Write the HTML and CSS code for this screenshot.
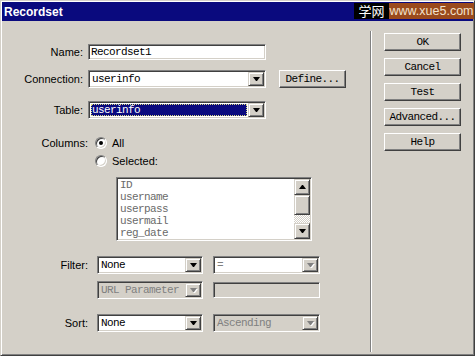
FILE: index.html
```html
<!DOCTYPE html>
<html lang="en">
<head>
  <meta charset="UTF-8" />
  <title>Recordset</title>
  <link rel="stylesheet" href="styles.css">
</head>
<body>
  <div class="window">
    <!-- Title bar -->
    <div class="titlebar">
      <span class="title">Recordset</span>
    </div>

    <!-- Site watermark over the title bar -->
    <div class="brand">
      <span class="brand-cn">学网</span>
      <span class="brand-url">www.xue5.com</span>
    </div>

    <div class="dialog">
      <!-- Form -->
      <div class="form">
        <div class="row row-name">
          <span class="label label-top">Name:</span>
          <div class="field field-name">Recordset1</div>
        </div>

        <div class="row row-conn">
          <span class="label label-top">Connection:</span>
          <div class="select select-main">
            <span class="select-text">userinfo</span>
            <span class="arrow"></span>
          </div>
          <div class="btn btn-define">Define...</div>
        </div>

        <div class="row row-table">
          <span class="label label-top">Table:</span>
          <div class="select select-main">
            <span class="select-text"><span class="focused">userinfo</span></span>
            <span class="arrow"></span>
          </div>
        </div>

        <div class="columns">
          <span class="label label-cols">Columns:</span>
          <div class="options">
            <div class="option"><span class="radio checked"></span>All</div>
            <div class="option option-sel"><span class="radio"></span>Selected:</div>
            <div class="listbox">
              <div class="list-items">
                <div>ID</div>
                <div>username</div>
                <div>userpass</div>
                <div>usermail</div>
                <div>reg_date</div>
              </div>
              <div class="scrollbar">
                <span class="sb-btn sb-up"></span>
                <span class="sb-thumb"></span>
                <span class="sb-track"></span>
                <span class="sb-btn sb-down"></span>
              </div>
            </div>
          </div>
        </div>

        <div class="row row-filter">
          <span class="label label-low">Filter:</span>
          <div class="select select-small">
            <span class="select-text">None</span>
            <span class="arrow"></span>
          </div>
          <div class="select select-small2 disabled-white">
            <span class="select-text">=</span>
            <span class="arrow"></span>
          </div>
        </div>

        <div class="row row-param">
          <span class="label label-low"></span>
          <div class="select select-small disabled">
            <span class="select-text">URL Parameter</span>
            <span class="arrow"></span>
          </div>
          <div class="field field-param disabled"></div>
        </div>

        <div class="row row-sort">
          <span class="label label-low">Sort:</span>
          <div class="select select-small">
            <span class="select-text">None</span>
            <span class="arrow"></span>
          </div>
          <div class="select select-small2 disabled">
            <span class="select-text">Ascending</span>
            <span class="arrow"></span>
          </div>
        </div>
      </div>

      <div class="separator"></div>

      <!-- Buttons -->
      <div class="actions">
        <div class="btn">OK</div>
        <div class="btn">Cancel</div>
        <div class="btn">Test</div>
        <div class="btn">Advanced...</div>
        <div class="btn">Help</div>
      </div>
    </div>
  </div>
</body>
</html>
```

FILE: styles.css
```css
/* ---- Global ---- */
html, body {
  margin: 0;
  padding: 0;
  overflow: hidden;
  background: #d4d0c8;
  font-family: "Liberation Sans", Arial, sans-serif;
  font-size: 11px;
  color: #000;
}

/* ---- Window frame ---- */
.window {
  position: relative;
  box-sizing: border-box;
  width: 475px;
  height: 356px;
  border: 1px solid;
  border-color: #d4d0c8 #404040 #404040 #d4d0c8;
  box-shadow: inset 1px 1px #fff, inset -1px -1px #808080;
  padding: 1px;
  display: flex;
  flex-direction: column;
}

.titlebar {
  height: 19px;
  background: #0a0a7e;
  display: flex;
  align-items: center;
  padding-left: 2px;
}
.title {
  color: #fff;
  font-weight: bold;
  font-size: 12px;
}

/* watermark */
.brand {
  position: absolute;
  top: 2px;
  right: 0;
  display: flex;
  height: 16px;
}
.brand-cn {
  background: #000;
  color: #fff;
  width: 35px;
  text-align: center;
  font-family: "Noto Sans CJK SC", sans-serif;
  font-size: 13px;
  line-height: 16px;
}
.brand-url {
  background: #9a4a1c;
  color: #f2e2cc;
  width: 85px;
  text-align: center;
  font-size: 12.5px;
  line-height: 16px;
}

/* ---- Dialog body ---- */
.dialog {
  flex: 1;
  display: flex;
}
.form {
  width: 368px;
  padding-top: 23px;
}
.separator {
  width: 1px;
  border-right: 1px solid #fff;
  background: #808080;
  margin: 10px 0 2px;
}
.actions {
  padding: 12px 0 0 12px;
  display: flex;
  flex-direction: column;
  gap: 7px;
}
.actions .btn {
  width: 77px;
}

/* ---- Rows ---- */
.row {
  display: flex;
  align-items: center;
}
.row-name  { height: 16px; }
.row-conn  { height: 18px; margin-top: 10px; }
.row-table { height: 18px; margin-top: 13px; }
.row-filter { height: 18px; margin-top: 15px; }
.row-param { height: 18px; margin-top: 7px; }
.row-sort  { height: 18px; margin-top: 15px; }

.label {
  text-align: right;
  flex: none;
}
.label-top { width: 81px; margin-right: 5px; }
.label-low { width: 86px; margin-right: 9px; }
.label-cols { width: 86px; margin-right: 7px; line-height: 16px; }

/* ---- Controls ---- */
.field, .select-text, .btn, .list-items {
  font-family: "Liberation Mono", "Courier New", monospace;
  font-size: 11px;
  letter-spacing: -0.6px;
}

.field {
  box-sizing: border-box;
  height: 16px;
  border: 1px solid;
  border-color: #808080 #fff #fff #808080;
  box-shadow: inset 1px 1px #404040, inset -1px -1px #d4d0c8;
  background: #fff;
  padding: 0 2px;
  line-height: 14px;
}
.field-name  { width: 178px; }
.field-param { width: 107px; margin-left: 10px; height: 16px; }

.select {
  box-sizing: border-box;
  height: 18px;
  display: flex;
  border: 1px solid;
  border-color: #808080 #fff #fff #808080;
  box-shadow: inset 1px 1px #404040, inset -1px -1px #d4d0c8;
  background: #fff;
  padding: 1px;
}
.select-main   { width: 178px; }
.select-small  { width: 106px; }
.select-small2 { width: 107px; margin-left: 10px; }

.select-text {
  flex: 1;
  line-height: 14px;
  padding-left: 2px;
  white-space: nowrap;
  overflow: hidden;
}
.focused {
  display: block;
  margin: 1px 1px 1px -1px;
  line-height: 12px;
  background: #0a0a7e;
  color: #fff;
  outline: 1px dotted #d8d880;
  outline-offset: -1px;
  padding-left: 1px;
}

.arrow, .sb-btn {
  box-sizing: border-box;
  width: 16px;
  height: 14px;
  background: #d4d0c8;
  border: 1px solid;
  border-color: #d4d0c8 #404040 #404040 #d4d0c8;
  box-shadow: inset 1px 1px #fff, inset -1px -1px #808080;
  display: flex;
  align-items: center;
  justify-content: center;
}
.arrow::after, .sb-down::after {
  content: "";
  width: 1px;
  height: 0;
  border-top: 4px solid #000;
  border-left: 3px solid transparent;
  border-right: 3px solid transparent;
}
.sb-up::after {
  content: "";
  width: 1px;
  height: 0;
  border-bottom: 4px solid #000;
  border-left: 3px solid transparent;
  border-right: 3px solid transparent;
}

.disabled, .disabled-white {
  color: #808080;
}
.disabled {
  background: #d4d0c8;
}
.disabled .arrow::after, .disabled-white .arrow::after {
  border-top-color: #808080;
  filter: drop-shadow(1px 1px 0 #fff);
}

/* ---- Buttons ---- */
.btn {
  box-sizing: border-box;
  height: 18px;
  border: 1px solid;
  border-color: #fff #404040 #404040 #fff;
  box-shadow: inset -1px -1px #808080;
  background: #d4d0c8;
  display: flex;
  align-items: center;
  justify-content: center;
  white-space: nowrap;
}
.btn-define {
  width: 67px;
  margin-left: 13px;
}

/* ---- Columns block ---- */
.columns {
  display: flex;
  margin-top: 16px;
}
.option {
  display: flex;
  align-items: center;
  height: 16px;
}
.option-sel { margin-top: 2px; }

.radio {
  box-sizing: border-box;
  width: 12px;
  height: 12px;
  border-radius: 50%;
  border: 1px solid;
  border-color: #808080 #fff #fff #808080;
  box-shadow: inset 1px 1px #404040, inset -1px -1px #d4d0c8;
  background: #fff;
  margin-right: 5px;
  display: flex;
  align-items: center;
  justify-content: center;
}
.radio.checked::after {
  content: "";
  width: 4px;
  height: 4px;
  border-radius: 50%;
  background: #000;
}

.listbox {
  box-sizing: border-box;
  width: 196px;
  height: 64px;
  margin: 8px 0 0 21px;
  display: flex;
  border: 1px solid;
  border-color: #808080 #fff #fff #808080;
  box-shadow: inset 1px 1px #404040, inset -1px -1px #d4d0c8;
  background: #fff;
  padding: 1px;
}
.list-items {
  flex: 1;
  color: #6a6a6a;
  line-height: 12px;
  padding-left: 2px;
  overflow: hidden;
}
.scrollbar {
  width: 16px;
  display: flex;
  flex-direction: column;
}
.sb-btn { height: 16px; }
.sb-thumb {
  box-sizing: border-box;
  height: 20px;
  background: #d4d0c8;
  border: 1px solid;
  border-color: #d4d0c8 #404040 #404040 #d4d0c8;
  box-shadow: inset 1px 1px #fff, inset -1px -1px #808080;
}
.sb-track {
  flex: 1;
  background: repeating-conic-gradient(#fff 0 25%, #d4d0c8 0 50%) 0 0 / 2px 2px;
}
```
